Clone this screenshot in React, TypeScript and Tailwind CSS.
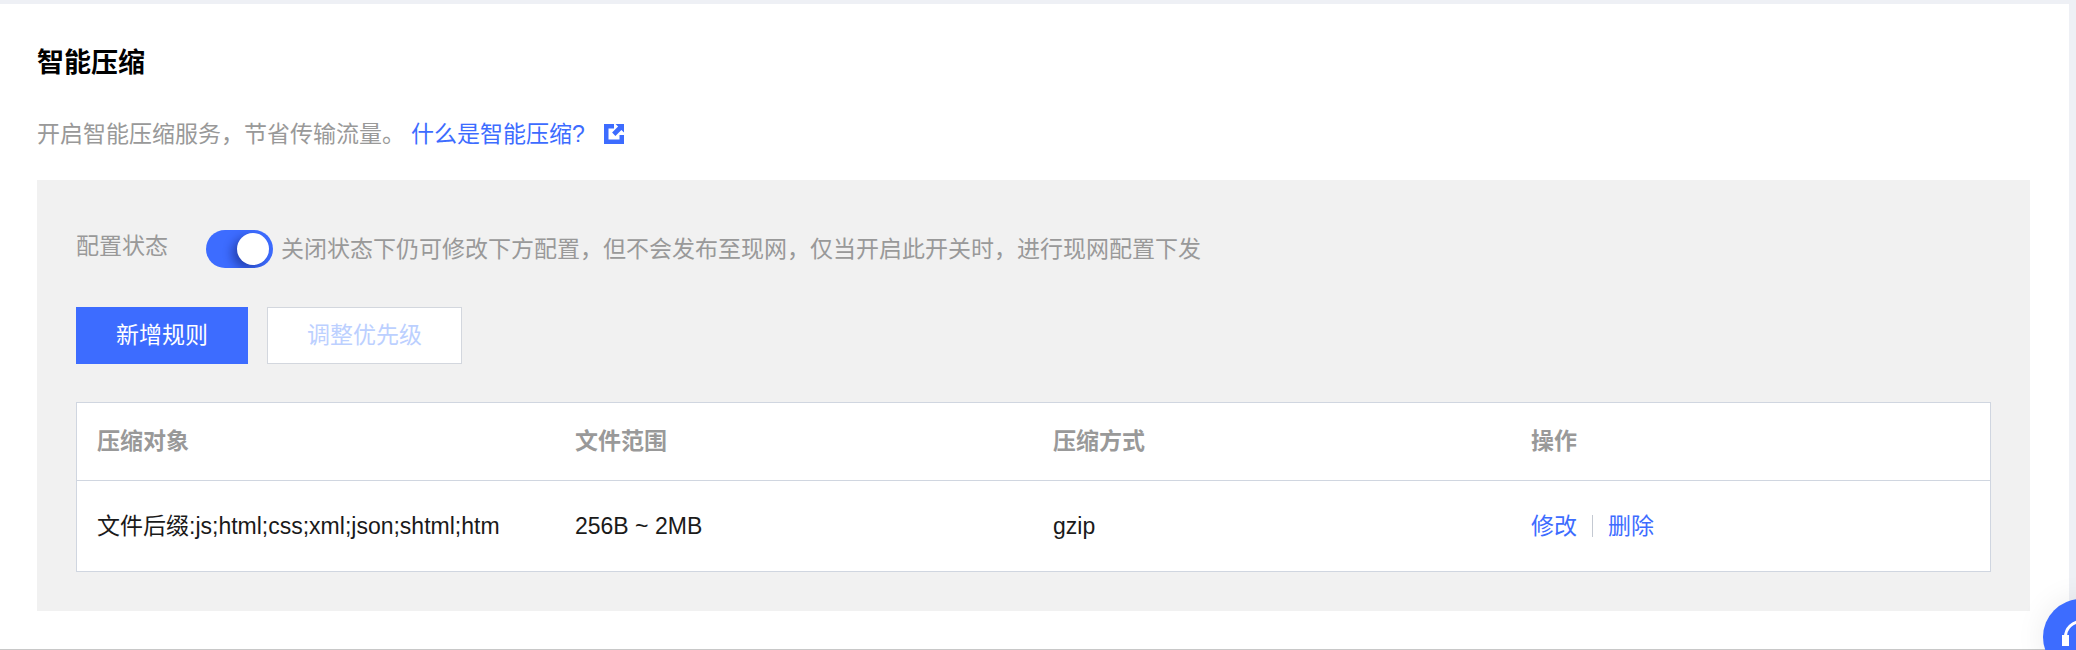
import React from 'react';

const fontStack = '[font-family:"Liberation_Sans","Noto_Sans_CJK_SC",sans-serif]';

const columns = ['压缩对象', '文件范围', '压缩方式', '操作'];

const App = () => {
  return (
    <div className={`${fontStack} relative h-[650px] w-[2076px] overflow-hidden bg-white`}>
      <div className="h-[650px] w-[2069px] border-t-4 border-b border-t-[#eef0f5] border-b-[#c8c8c8] px-[37px] pr-[39px]">
        <h1 className="mt-[41px] h-[36px] text-[27px] leading-[36px] font-bold text-black">智能压缩</h1>

        <div className="mt-[35px] flex h-[36px] items-center text-[23px] leading-[36px] text-[#999999]">
          <span>开启智能压缩服务，节省传输流量。</span>
          <a className="ml-[6px] text-[#3d6cff]">什么是智能压缩?</a>
          <svg className="ml-[19px]" width="20" height="20" viewBox="0 0 20 20">
            <path d="M0 0h10v4.5H4.5v11h11V11H20v9H0z" fill="#3d6cff" />
            <path d="M11.5 0H20v8.5l-2.6-2.6-6 6-3.3-3.3 6-6z" fill="#3d6cff" />
          </svg>
        </div>

        {/* 配置面板 */}
        <div className="mt-[28px] h-[431px] bg-[#f1f1f1] px-[39px] pt-[50px]">
          <div className="flex h-[38px] items-center">
            <span className="mb-[6px] w-[130px] text-[23px] text-[#999999]">配置状态</span>
            <div className="relative h-[38px] w-[67px] overflow-hidden rounded-full bg-[#3d6cff]">
              <div className="absolute top-[3px] right-[4px] h-[32px] w-[32px] rounded-full bg-white shadow-[-5px_4px_10px_rgba(10,20,90,0.45)]" />
            </div>
            <span className="ml-[8px] text-[23px] text-[#999999]">
              关闭状态下仍可修改下方配置，但不会发布至现网，仅当开启此开关时，进行现网配置下发
            </span>
          </div>

          <div className="mt-[39px] flex gap-[19px]">
            <button className="h-[57px] w-[172px] bg-[#3d6cff] text-[23px] text-white">新增规则</button>
            <button className="h-[57px] w-[195px] border border-[#d3d7de] bg-white text-[23px] text-[#bcd0ff]">
              调整优先级
            </button>
          </div>

          <div className="mt-[38px] h-[170px] border border-[#d0d6e0] bg-white">
            <div className="grid h-[78px] grid-cols-[478px_478px_478px_1fr] items-center border-b border-[#d0d6e0] pl-[20px] text-[23px] font-bold text-[#999999]">
              {columns.map((col) => (
                <span key={col}>{col}</span>
              ))}
            </div>
            <div className="grid h-[90px] grid-cols-[478px_478px_478px_1fr] items-center pl-[20px] text-[23px] text-[#1a1a1a]">
              <span>文件后缀:js;html;css;xml;json;shtml;htm</span>
              <span>256B ~ 2MB</span>
              <span>gzip</span>
              <span className="flex items-center text-[#3d6cff]">
                <a>修改</a>
                <i className="mx-[15px] h-[22px] w-px bg-[#c4c9d2]" />
                <a>删除</a>
              </span>
            </div>
          </div>
        </div>
      </div>

      <div className="absolute top-0 right-0 h-[650px] w-[7px] bg-[#eef0f5]" />

      {/* 悬浮客服按钮 */}
      <div className="absolute top-[599px] left-[2043px] flex h-[76px] w-[76px] items-center justify-center rounded-full bg-[#3d6cff] shadow-[0_0_30px_rgba(0,0,0,0.08)]">
        <svg width="44" height="44" viewBox="0 0 44 44" fill="none">
          <path d="M6.5 22A15.5 15.5 0 0 1 37.5 22" stroke="#fff" strokeWidth="3" />
          <rect x="3" y="20" width="7" height="11" fill="#fff" />
          <rect x="34" y="20" width="7" height="11" fill="#fff" />
        </svg>
      </div>
    </div>
  );
};

export default App;
